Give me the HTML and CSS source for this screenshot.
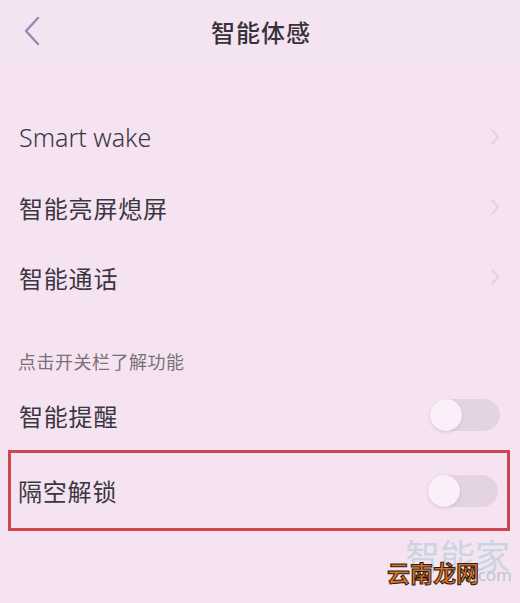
FILE: index.html
```html
<!DOCTYPE html>
<html lang="zh-CN">
<head>
<meta charset="UTF-8">
<meta name="viewport" content="width=device-width, initial-scale=1.0">
<title>智能体感</title>
<link rel="stylesheet" href="styles.css">
</head>
<body>
<div class="screen">
    <div class="header">
        <div class="back">
            <svg width="18" height="30" viewBox="0 0 18 30"><path d="M15 2 L3 15 L15 28" fill="none" stroke="#8b8fb2" stroke-width="2.4" stroke-linecap="round" stroke-linejoin="round"/></svg>
        </div>
        <div class="title">智能体感</div>
        <div></div>
    </div>

    <div class="list">
        <div class="row">
            <span class="label latin">Smart wake</span>
            <span class="arrow"><svg width="10" height="18" viewBox="0 0 10 18"><path d="M2 2 L8 9 L2 16" fill="none" stroke="#e4d2e1" stroke-width="2" stroke-linecap="round"/></svg></span>
        </div>
        <div class="row">
            <span class="label">智能亮屏熄屏</span>
            <span class="arrow"><svg width="10" height="18" viewBox="0 0 10 18"><path d="M2 2 L8 9 L2 16" fill="none" stroke="#e4d2e1" stroke-width="2" stroke-linecap="round"/></svg></span>
        </div>
        <div class="row">
            <span class="label">智能通话</span>
            <span class="arrow"><svg width="10" height="18" viewBox="0 0 10 18"><path d="M2 2 L8 9 L2 16" fill="none" stroke="#e4d2e1" stroke-width="2" stroke-linecap="round"/></svg></span>
        </div>
    </div>

    <div class="section-title">点击开关栏了解功能</div>

    <div class="list">
        <div class="row">
            <span class="label">智能提醒</span>
            <span class="switch"><span class="knob"></span></span>
        </div>
        <div class="row boxed">
            <span class="label">隔空解锁</span>
            <span class="switch"><span class="knob"></span></span>
        </div>
    </div>

    <!-- watermark stamped over the screenshot -->
    <div class="watermark">
        <span class="wm-back">智能家</span>
        <span class="wm-front">云南龙网</span>
        <span class="wm-com">.com</span>
    </div>
</div>
</body>
</html>
```

FILE: styles.css
```css
body {
    margin: 0;
    padding: 0;
    font-family: "Noto Sans", "Noto Sans CJK SC", sans-serif;
    background-color: #f5e3f1;
    color: #3b3741;
}
.screen {
    width: 520px;
    height: 603px;
    position: relative;
    overflow: hidden;
    background-color: #f5e3f1;
}
.header {
    height: 62px;
    display: grid;
    grid-template-columns: 1fr auto 1fr;
    align-items: center;
    background-color: #f4e3f1;
}
.back {
    padding-left: 23px;
    display: flex;
    align-items: center;
}
.title {
    font-size: 24px;
    font-weight: 500;
    color: #37323a;
    letter-spacing: 1px;
    padding-left: 2px;
}
.list {
    display: flex;
    flex-direction: column;
}
.header + .list {
    margin-top: 40px;
}
.row {
    height: 70px;
    display: flex;
    align-items: center;
    justify-content: space-between;
    padding: 0 20px 0 19px;
}
.label {
    font-size: 24px;
    letter-spacing: 0.8px;
}
.label.latin {
    font-size: 25px;
    font-weight: 300;
    letter-spacing: 0;
}
.arrow {
    display: flex;
}
.section-title {
    font-size: 18px;
    color: #7c7079;
    padding: 38px 0 6px 18px;
    line-height: 24px;
    height: 24px;
    letter-spacing: 0.5px;
}
.switch {
    width: 70px;
    height: 32px;
    border-radius: 16px;
    background-color: #e4d4e1;
    display: flex;
    align-items: center;
}
.knob {
    width: 32px;
    height: 32px;
    border-radius: 50%;
    background-color: #fbeff9;
    box-shadow: 0 1px 3px rgba(120, 90, 120, 0.25);
}
.row.boxed {
    height: 75px;
    margin: 0 10px 0 8px;
    border: 3px solid #d0464f;
    padding: 0 9px 0 7px;
}
.watermark {
    position: absolute;
    right: 8px;
    bottom: 10px;
    width: 125px;
    height: 58px;
}
.wm-back {
    position: absolute;
    right: 2px;
    top: -6px;
    font-size: 35px;
    color: #c9d6df;
    letter-spacing: 0;
}
.wm-front {
    position: absolute;
    left: 0;
    top: 20px;
    font-size: 23px;
    font-weight: 700;
    color: #e2701e;
    -webkit-text-stroke: 1px #2a1a10;
    text-shadow: 0 0 2px #fff;
}
.wm-com {
    position: absolute;
    right: 0;
    top: 28px;
    font-size: 17px;
    color: #bcc6cf;
}
```
